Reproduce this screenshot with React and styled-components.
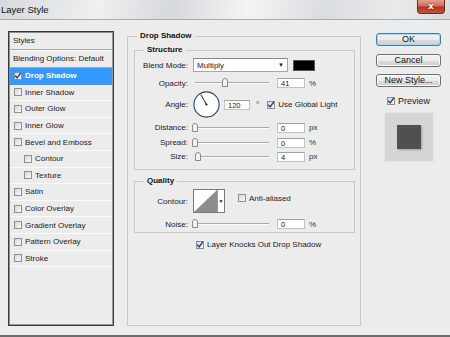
import React from 'react'
import styled, { createGlobalStyle } from 'styled-components'

const GlobalStyle = createGlobalStyle`
  html, body { margin:0; padding:0; }
  body {
    background:#ececec;
    font-family:"Liberation Sans", Arial, sans-serif;
    font-size:8px;
    color:#1b1b1b;
  }
`

const styleItems = [
  { name: 'Drop Shadow', checked: true, active: true },
  { name: 'Inner Shadow' },
  { name: 'Outer Glow' },
  { name: 'Inner Glow' },
  { name: 'Bevel and Emboss' },
  { name: 'Contour', sub: true },
  { name: 'Texture', sub: true },
  { name: 'Satin' },
  { name: 'Color Overlay' },
  { name: 'Gradient Overlay' },
  { name: 'Pattern Overlay' },
  { name: 'Stroke' },
]

const sliders = [
  { label: 'Distance:', value: 0, unit: 'px', mt: 3 },
  { label: 'Spread:', value: 0, unit: '%', mt: 4 },
  { label: 'Size:', value: 4, unit: 'px', mt: 3 },
]

function CheckBox({ checked }) {
  return (
    <Box>
      {checked && (
        <svg width="8" height="8" viewBox="0 0 8 8">
          <path d="M1.2 3.8 L3.2 6 L6.8 0.8" stroke="#233f8c" strokeWidth="1.4" fill="none" />
        </svg>
      )}
    </Box>
  )
}

function Slider({ pct }) {
  return (
    <Track>
      <Thumb style={{ left: `${pct}%` }}>
        <svg width="6" height="9" viewBox="0 0 6 9">
          <path d="M0.5 8.5 V3 Q0.5 0.5 3 0.5 Q5.5 0.5 5.5 3 V8.5 Z" fill="#f4f4f4" stroke="#8a8a8a" />
        </svg>
      </Thumb>
    </Track>
  )
}

function Dial({ angle }) {
  const r = (angle * Math.PI) / 180
  const x = 13.5 + Math.cos(r) * 11.5
  const y = 13.5 - Math.sin(r) * 11.5
  return (
    <DialWrap>
      <svg width="27" height="27" viewBox="0 0 27 27">
        <circle cx="13.5" cy="13.5" r="12.6" fill="#fff" stroke="#2c4566" strokeWidth="1.1" />
        <line x1="13.5" y1="13.5" x2={x} y2={y} stroke="#1d1d1d" strokeWidth="1" />
        <circle cx="13.5" cy="13.5" r="1.1" fill="#1d1d1d" />
      </svg>
    </DialWrap>
  )
}

export default function App() {
  return (
    <Window>
      <GlobalStyle />
      <TitleBar>
        <Title>Layer Style</Title>
        <CloseBtn>x</CloseBtn>
      </TitleBar>
      <Body>
        <StylesPanel>
          <HeadRow>Styles</HeadRow>
          <HeadRow $h={18}>Blending Options: Default</HeadRow>
          {styleItems.map((s) => (
            <StyleRow key={s.name} $active={s.active} $sub={s.sub}>
              <CheckBox checked={s.checked} />
              <span>{s.name}</span>
            </StyleRow>
          ))}
        </StylesPanel>

        <Main>
          <Group $outer>
            <Legend $outer>Drop Shadow</Legend>
            <Group>
              <Legend>Structure</Legend>
              <Row $h={14}>
                <Label>Blend Mode:</Label>
                <Select>
                  <span>Multiply</span>
                  <Arrow>▼</Arrow>
                </Select>
                <Swatch />
              </Row>
              <Row $h={12} $mt={5}>
                <Label>Opacity:</Label>
                <Slider pct={41} />
                <Field>41</Field>
                <Unit>%</Unit>
              </Row>
              <Row $h={29} $mt={1}>
                <Label>Angle:</Label>
                <Dial angle={120} />
                <Field $w={26}>120</Field>
                <Degree>°</Degree>
                <CheckBox checked />
                <Caption>Use Global Light</Caption>
              </Row>
              {sliders.map((s) => (
                <Row key={s.label} $h={11} $mt={s.mt}>
                  <Label>{s.label}</Label>
                  <Slider pct={s.value} />
                  <Field>{s.value}</Field>
                  <Unit>{s.unit}</Unit>
                </Row>
              ))}
            </Group>

            <Group $quality>
              <Legend>Quality</Legend>
              <Row $h={24} $mt={3}>
                <Label>Contour:</Label>
                <ContourBox>
                  <svg width="23" height="22" viewBox="0 0 23 22">
                    <polygon points="0,22 23,0 23,22" fill="#8c8c8c" />
                  </svg>
                  <ContourArrow>▼</ContourArrow>
                </ContourBox>
                <AntiAlias>
                  <CheckBox />
                  <Caption>Anti-aliased</Caption>
                </AntiAlias>
              </Row>
              <Row $h={10} $mt={6}>
                <Label>Noise:</Label>
                <Slider pct={0} />
                <Field>0</Field>
                <Unit>%</Unit>
              </Row>
            </Group>

            <KnockRow>
              <CheckBox checked />
              <Caption>Layer Knocks Out Drop Shadow</Caption>
            </KnockRow>
          </Group>
        </Main>

        <Side>
          <Button $default>OK</Button>
          <Button>Cancel</Button>
          <Button>New Style...</Button>
          <PreviewToggle>
            <CheckBox checked />
            <PreviewText>Preview</PreviewText>
          </PreviewToggle>
          <PreviewBox>
            <PreviewSquare />
          </PreviewBox>
        </Side>
      </Body>
    </Window>
  )
}

const Window = styled.div`
  width:450px;
  height:337px;
  box-sizing:border-box;
  border-bottom:2px solid #6c6c6c;
  display:flex;
  flex-direction:column;
  overflow:hidden;
`

const TitleBar = styled.div`
  height:19px;
  flex:none;
  display:flex;
  justify-content:space-between;
  align-items:flex-start;
  border-bottom:1px solid #a9abad;
  background:linear-gradient(100deg, #d7dadd 0%, #eef0f1 22%, #d6d9dc 38%, #f3f4f5 55%, #dadde0 72%, #e9ebec 88%, #d8dbde 100%);
`

const Title = styled.div`
  font-size:9.5px;
  color:#111;
  padding:4px 0 0 1px;
`

const CloseBtn = styled.div`
  width:28px;
  height:14px;
  margin-right:5px;
  box-sizing:border-box;
  border:1px solid #6e2a22;
  border-top:none;
  border-radius:0 0 4px 4px;
  background:linear-gradient(#e0a497 0%, #cf6b58 45%, #b5321e 55%, #c9543c 100%);
  color:#fff;
  font-family:"DejaVu Sans", sans-serif;
  font-weight:bold;
  font-size:9px;
  line-height:12px;
  text-align:center;
  text-shadow:0 0 2px #5a1208;
`

const Body = styled.div`
  flex:1;
  display:flex;
  align-items:flex-start;
  padding:11px 0 0 8px;
`

const StylesPanel = styled.div`
  width:106px;
  height:295px;
  box-sizing:border-box;
  flex:none;
  border:1px solid #3a3a3a;
  box-shadow:inset 1px 1px 0 #8d8d8d, inset -1px -1px 0 #9a9a9a;
  background:#ececec;
  padding:0 1px;
`

const HeadRow = styled.div`
  height:${(p) => p.$h || 18}px;
  box-sizing:border-box;
  display:flex;
  align-items:center;
  padding-left:3px;
  border-bottom:1px solid #a8a8a8;
  box-shadow:0 1px 0 #fafafa;
`

const StyleRow = styled.div`
  height:16.6px;
  box-sizing:border-box;
  display:flex;
  align-items:center;
  gap:3px;
  padding-left:${(p) => (p.$sub ? 14 : 4)}px;
  border-bottom:1px solid ${(p) => (p.$active ? '#3399ff' : '#fbfbfb')};
  background:${(p) => (p.$active ? '#3399ff' : 'transparent')};
  color:${(p) => (p.$active ? '#fff' : '#1b1b1b')};
  font-weight:${(p) => (p.$active ? 'bold' : 'normal')};
`

const Box = styled.span`
  width:8px;
  height:8px;
  flex:none;
  box-sizing:border-box;
  border:1px solid #8e8f8f;
  background:linear-gradient(135deg, #d6d6d6, #fbfbfb);
  display:inline-flex;
  align-items:center;
  justify-content:center;
  svg { margin:-1px; }
`

const Main = styled.div`
  width:234px;
  margin-left:13px;
  flex:none;
`

const Group = styled.fieldset`
  margin:${(p) => (p.$quality ? '6px 0 0' : p.$outer ? '0' : '2px 0 0')};
  padding:${(p) => (p.$outer ? '2px 5px 0 6px' : p.$quality ? '0 0 3px 2px' : '3px 0 7px 2px')};
  height:${(p) => (p.$outer ? '295px' : 'auto')};
  box-sizing:border-box;
  border:1px solid #c9c9c9;
  min-inline-size:0;
`

const Legend = styled.legend`
  margin-left:${(p) => (p.$outer ? 3 : 7)}px;
  padding:0 3px;
  height:10px;
  line-height:10px;
  font-weight:bold;
  color:#111;
`

const Row = styled.div`
  display:flex;
  align-items:center;
  height:${(p) => p.$h}px;
  margin-top:${(p) => p.$mt || 0}px;
`

const Label = styled.span`
  width:51px;
  flex:none;
  text-align:right;
  margin-right:5px;
`

const Select = styled.div`
  width:95px;
  height:14px;
  box-sizing:border-box;
  border:1px solid #a6a6a6;
  border-top-color:#8a8a8a;
  background:#fff;
  display:flex;
  align-items:center;
  justify-content:space-between;
  padding:0 3px 0 3px;
`

const Arrow = styled.span`
  font-size:6px;
  color:#222;
`

const Swatch = styled.div`
  width:22px;
  height:11px;
  margin-left:5px;
  background:#000;
  border:1px solid #555;
  box-sizing:border-box;
`

const Track = styled.div`
  position:relative;
  width:74px;
  height:10px;
  margin:0 8px 0 2px;
  flex:none;
  &::before{
    content:'';
    position:absolute;
    left:0;
    right:0;
    top:4px;
    border-top:1px solid #a9a9a9;
    border-bottom:1px solid #fdfdfd;
  }
`

const Thumb = styled.div`
  position:absolute;
  top:0;
  width:6px;
  height:9px;
  transform:translateX(-50%);
  svg { display:block; }
`

const Field = styled.div`
  width:${(p) => p.$w || 28}px;
  height:10px;
  box-sizing:border-box;
  flex:none;
  background:#fff;
  border:1px solid #c2c2c2;
  border-top-color:#a0a0a0;
  padding-left:3px;
  line-height:9px;
  font-size:7.5px;
`

const Unit = styled.span`
  margin-left:4px;
  color:#333;
`

const DialWrap = styled.div`
  width:27px;
  height:27px;
  margin-right:4px;
  svg { display:block; }
`

const Degree = styled.span`
  margin:0 8px 0 6px;
`

const Caption = styled.span`
  margin-left:3px;
`

const ContourBox = styled.div`
  display:flex;
  height:24px;
  box-sizing:border-box;
  border:1px solid #7a7a7a;
  background:#fff;
  svg { display:block; }
`

const ContourArrow = styled.span`
  width:6px;
  border-left:1px solid #9a9a9a;
  font-size:5px;
  display:flex;
  align-items:center;
  justify-content:center;
`

const AntiAlias = styled.div`
  display:flex;
  align-items:center;
  margin-left:13px;
  margin-top:-6px;
`

const KnockRow = styled.div`
  display:flex;
  align-items:center;
  height:9px;
  margin:7px 0 0 62px;
`

const Side = styled.div`
  width:65px;
  margin:2px 0 0 15px;
  display:flex;
  flex-direction:column;
  align-items:center;
  gap:7.5px;
`

const Button = styled.div`
  width:65px;
  height:13px;
  box-sizing:border-box;
  border:1px solid ${(p) => (p.$default ? '#3c7fb1' : '#707070')};
  border-radius:3px;
  box-shadow:${(p) => (p.$default ? 'inset 0 0 0 1px #a8d8f0' : 'inset 0 0 0 1px #fbfbfb')};
  background:linear-gradient(#f2f2f2 0%, #ebebeb 50%, #dddddd 51%, #cfcfcf 100%);
  font-size:9px;
  line-height:11px;
  text-align:center;
  color:#111;
`

const PreviewToggle = styled.div`
  display:flex;
  align-items:center;
  gap:3px;
  margin-top:1.5px;
`

const PreviewText = styled.span`
  font-size:9px;
`

const PreviewBox = styled.div`
  width:50px;
  height:50px;
  margin-top:-1.5px;
  box-sizing:border-box;
  border:1px solid #e6e6e6;
  background:#d6d6d6;
  display:flex;
  align-items:center;
  justify-content:center;
`

const PreviewSquare = styled.div`
  width:24px;
  height:24px;
  background:#505050;
  box-shadow:1px 1px 2px rgba(0,0,0,0.25);
`
